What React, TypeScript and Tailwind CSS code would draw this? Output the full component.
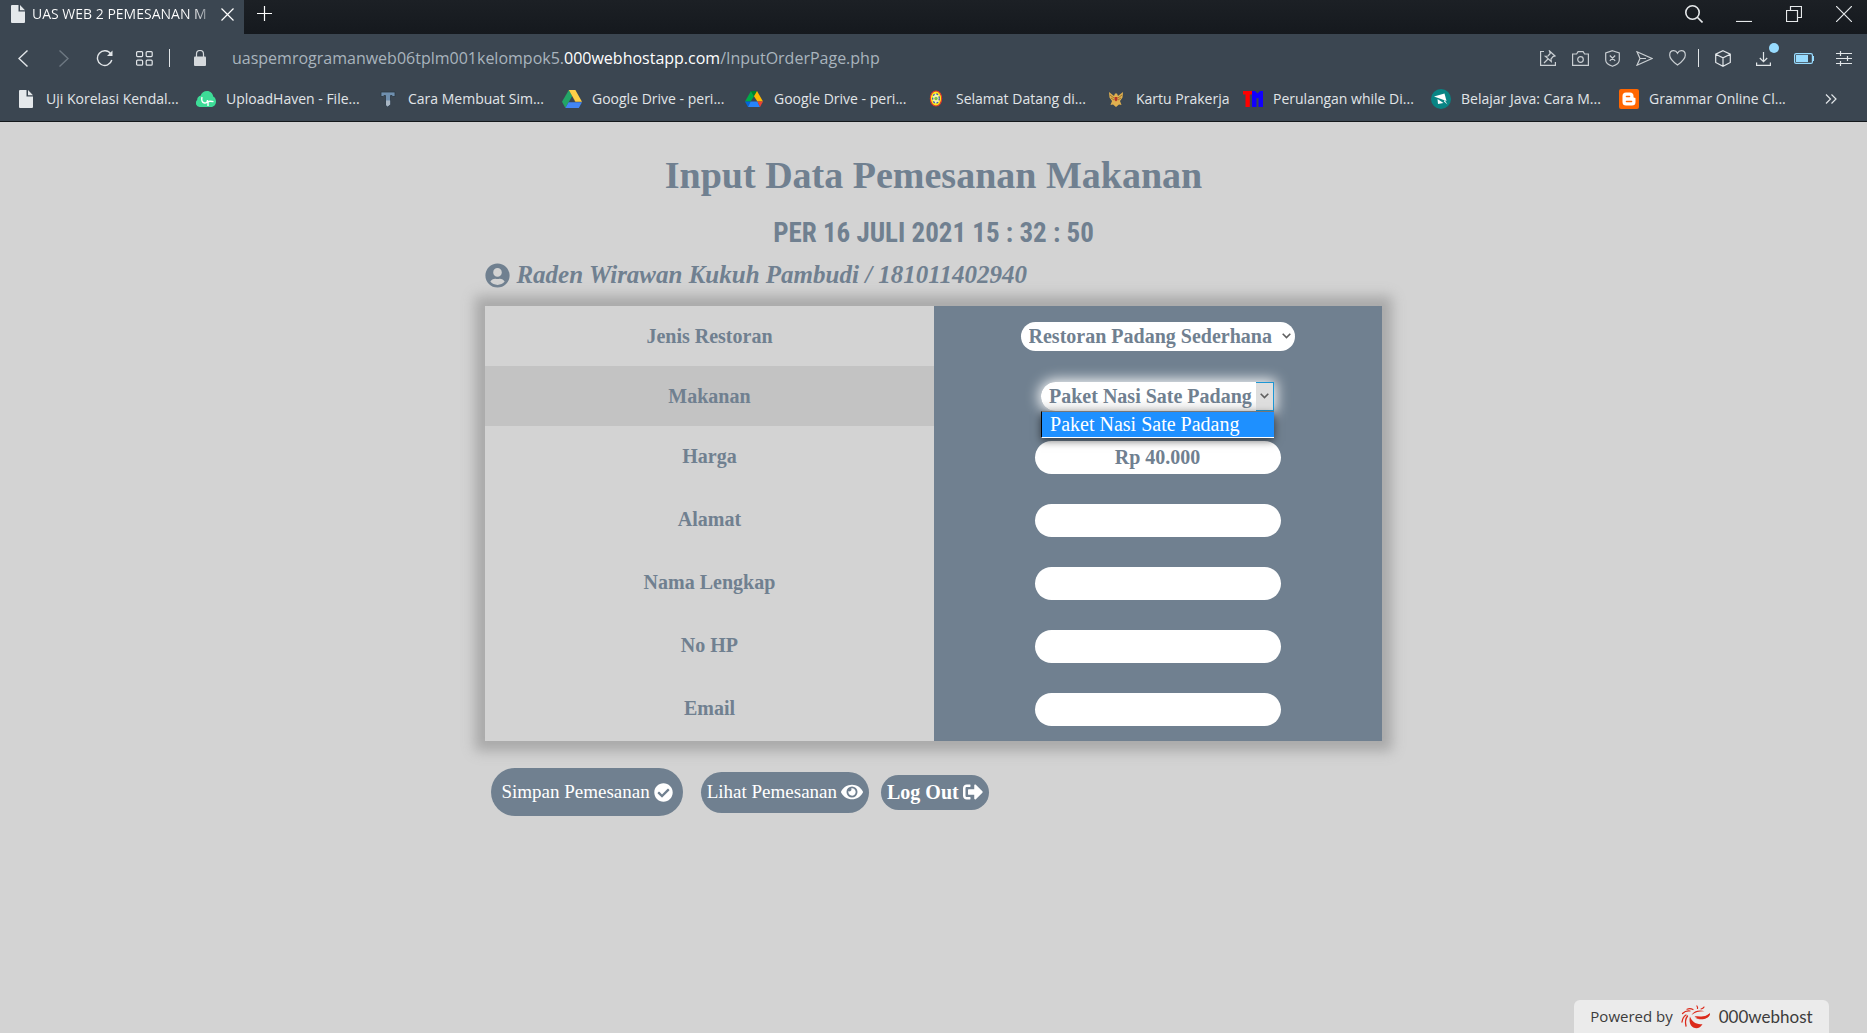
import { useState, type ReactNode } from "react";
import { FaCheckCircle, FaEye, FaSignOutAlt, FaUserCircle } from "react-icons/fa";

function PageIcon() {
  return (
    <svg viewBox="0 0 14 18" className="h-[18px] w-[14px]" fill="#e4e8eb">
      <path d="M0 1a1 1 0 0 1 1-1h6.500v6.500H14V17a1 1 0 0 1-1 1H1a1 1 0 0 1-1-1z" />
      <path d="M9 0l5 5.200H9z" />
    </svg>
  );
}

function DriveOldIcon() {
  return (
    <svg viewBox="0 0 20 18" className="h-[18px] w-5">
      <path d="M6.800 0L0 11.800 3.400 18 10.200 6z" fill="#23a566" />
      <path d="M6.800 0h6.600L20 11.800h-6.600z" fill="#ffcf48" />
      <path d="M6.600 12.200H20L16.800 18H3.400z" fill="#4285f4" />
      <path d="M13.400 11.800L10.200 6l3 6z" fill="#c79a2d" />
    </svg>
  );
}

function DriveIcon() {
  return (
    <svg viewBox="0 0 18 16" className="h-4 w-[18px]">
      <path d="M6 0L0 10.500h5.600L9 5.200z" fill="#00ac47" />
      <path d="M6 0h6L9 5.200z" fill="#00832d" />
      <path d="M12 0l6 10.500h-5.600L9 5.200z" fill="#ffba00" />
      <path d="M0 10.500h5.600L3 16z" fill="#0066da" />
      <path d="M5.600 10.500h6.800L15 16H3z" fill="#2684fc" />
      <path d="M12.400 10.500H18L15 16z" fill="#ea4335" />
    </svg>
  );
}

function CloudIcon() {
  return (
    <svg viewBox="0 0 20 16" className="h-4 w-5">
      <path d="M4 16a4 4 0 0 1-2.800-7C1 6.500 3 5 4.500 4.800 5.500 1.500 8 0 11 0c3.500 0 6 2.500 6.200 5.600C19 6.500 20 8.500 20 10.500c0 3-2 5.500-5 5.500z" fill="#3ddc97" />
      <path d="M6 6c-.8 3 0 5.500 2.500 6 2 .3 3.200-1.200 3-3M12 15v-3.500c0-1.500 3-1.500 5.500-.8" fill="none" stroke="#fff" strokeWidth="1.400" />
    </svg>
  );
}

function HammerIcon() {
  return (
    <svg viewBox="0 0 16 16" className="size-4">
      <path d="M1 1h14v4.500h-2.500l-.5-1h-1.500v9l-3 2.500-2-2V4.500H4L3 5.500H1z" fill="#6f8fae" stroke="#2c3743" strokeWidth=".8" />
      <path d="M6 9.500h4.200v4L7.500 15.500 6 14z" fill="#a9b6c3" />
    </svg>
  );
}

function SealIcon() {
  return (
    <svg viewBox="0 0 14 18" className="h-[17px] w-[14px]">
      <ellipse cx="7" cy="9" rx="6" ry="8" fill="#ffe81a" stroke="#e0392b" strokeWidth="1.200" />
      <ellipse cx="7" cy="9" rx="3.500" ry="5" fill="#f4f0b0" stroke="#3558b8" strokeWidth="1.400" strokeDasharray="2 2" />
      <circle cx="7" cy="9" r="1.800" fill="#7ac043" />
    </svg>
  );
}

function GarudaIcon() {
  return (
    <svg viewBox="0 0 16 16" className="size-4">
      <path d="M1 1l5 4 1-2.500h2L10 5l5-4-.5 5.500L12 10l1.500 4-2.500-.5L8 16l-3-2.500-2.500.5L4 10 1.500 6.500z" fill="#e0b04f" />
      <path d="M6.500 6h3v3L8 10.500 6.500 9z" fill="#b3362a" />
      <path d="M2 4l4 3M14 4l-4 3M3 7l3 2M13 7l-3 2" stroke="#8f6a24" strokeWidth=".8" />
    </svg>
  );
}

function TmIcon() {
  return (
    <svg viewBox="0 0 20 16" className="h-4 w-5">
      <path d="M0 0h9v3.500H6.800V16H2.500V3.500H0z" fill="#f00" />
      <path d="M9 0h3l2.500 2.500L17 0h3v16h-4.500V6.500l-1 1-1-1V16H9z" fill="#10f" />
    </svg>
  );
}

function TutorialIcon() {
  return (
    <svg viewBox="0 0 20 20" className="size-5">
      <circle cx="10" cy="10" r="10" fill="#098484" />
      <path d="M3 7.500l10.500-3L15.500 12z" fill="#fff" />
      <path d="M6.500 10l6 4-5.500 1z" fill="#fff" />
      <path d="M13.500 11l3 4.500-3.500-3z" fill="#fff" />
    </svg>
  );
}

function BloggerIcon() {
  return (
    <svg viewBox="0 0 20 20" className="size-5">
      <rect width="20" height="20" rx="2" fill="#ff6600" />
      <path d="M7 3.500h4a3.500 3.500 0 0 1 3.500 3.500v.8c0 .7.400 1 1 1 .8 0 1 .3 1 1V13a3.500 3.500 0 0 1-3.500 3.500H7A3.500 3.500 0 0 1 3.500 13V7A3.500 3.500 0 0 1 7 3.500z" fill="#fff" />
      <path d="M7.500 7.500h3M7.500 12.500h5" stroke="#ff6600" strokeWidth="1.600" strokeLinecap="round" />
    </svg>
  );
}

type LineProps = { box: string; className: string; children: ReactNode };

function Line({ box, className, children }: LineProps) {
  return (
    <svg viewBox={box} className={className} fill="none" stroke="currentColor" strokeWidth="1.200">
      {children}
    </svg>
  );
}

const bookmarks = [
  { label: "Uji Korelasi Kendal...", icon: <PageIcon />, width: "w-[180px]" },
  { label: "UploadHaven - File...", icon: <CloudIcon />, width: "w-[182px]" },
  { label: "Cara Membuat Sim...", icon: <HammerIcon />, width: "w-[184px]" },
  { label: "Google Drive - peri...", icon: <DriveOldIcon />, width: "w-[182px]" },
  { label: "Google Drive - peri...", icon: <DriveIcon />, width: "w-[182px]" },
  { label: "Selamat Datang di...", icon: <SealIcon />, width: "w-[180px]" },
  { label: "Kartu Prakerja", icon: <GarudaIcon />, width: "w-[137px]" },
  { label: "Perulangan while Di...", icon: <TmIcon />, width: "w-[188px]" },
  { label: "Belajar Java: Cara M...", icon: <TutorialIcon />, width: "w-[188px]" },
  { label: "Grammar Online Cl...", icon: <BloggerIcon />, width: "w-[188px]" },
];

function TabBar() {
  return (
    <div className="flex h-[34px] justify-between bg-linear-to-b from-[#1c2025] to-[#15191e]">
      <div className="flex">
        <div className="flex w-[244px] items-center bg-[#3b4651] pb-[6px] pl-[11px] text-white">
          <PageIcon />
          <span className="ml-[7px] w-[184px] bg-linear-to-r from-white from-88% to-[#3b4651] bg-clip-text text-[14px] leading-5 whitespace-nowrap text-transparent">
            UAS WEB 2 PEMESANAN M
          </span>
          <button aria-label="Close tab" className="ml-[5px]">
            <Line box="0 0 13 13" className="size-[13px]"><path d="M.5.5l12 12M12.500.5l-12 12" /></Line>
          </button>
        </div>
        <button aria-label="New tab" className="ml-[13px] pb-[7px] text-white">
          <Line box="0 0 15 15" className="size-[15px]"><path d="M7.500 0v15M0 7.500h15" /></Line>
        </button>
      </div>
      <div className="flex items-center pr-[15px] pb-[7px] text-[#e6e9eb]">
        <button aria-label="Search tabs">
          <Line box="0 0 18 18" className="size-[18px]"><circle cx="7.500" cy="7.500" r="6.700" strokeWidth="1.600" /><path d="M12.300 12.300l5.200 5.200" strokeWidth="1.600" /></Line>
        </button>
        <button aria-label="Minimize" className="ml-[33px]">
          <Line box="0 0 16 16" className="size-4"><path d="M0 15.500h16" /></Line>
        </button>
        <button aria-label="Restore" className="ml-[34px]">
          <Line box="0 0 16 16" className="size-4"><path d="M.5 4.500h11v11H.5zM4.500 4.500v-4h11v11h-4" /></Line>
        </button>
        <button aria-label="Close window" className="ml-[34px]">
          <Line box="0 0 16 16" className="size-4"><path d="M0 0l16 16M16 0L0 16" /></Line>
        </button>
      </div>
    </div>
  );
}

function AddressBar() {
  return (
    <div className="flex h-[48px] items-center pr-[15px] pl-[18px] text-[#e1e5e8]">
      <button aria-label="Back"><Line box="0 0 10 17" className="h-[17px] w-[10px]"><path d="M9.500.5l-8.500 8 8.500 8" strokeWidth="1.400" /></Line></button>
      <button aria-label="Forward" className="ml-[31px] text-[#6d7882]"><Line box="0 0 10 17" className="h-[17px] w-[10px]"><path d="M.5.5l8.500 8-8.500 8" strokeWidth="1.400" /></Line></button>
      <button aria-label="Reload" className="ml-[27px]">
        <Line box="0 0 17 17" className="size-[17px]"><path d="M14.800 4A7.300 7.300 0 1 0 15.800 10" strokeWidth="1.400" /><path d="M16.500.5v5.500H11z" fill="currentColor" stroke="none" /></Line>
      </button>
      <button aria-label="Speed dial" className="ml-[23px]">
        <Line box="0 0 17 15" className="h-[15px] w-[17px]">
          <rect x=".6" y=".6" width="6" height="5" rx="1" /><rect x="10.200" y=".6" width="6" height="5" rx="1" />
          <rect x=".6" y="9.200" width="6" height="5" rx="1" /><rect x="10.200" y="9.200" width="6" height="5" rx="1" />
        </Line>
      </button>
      <span className="ml-4 h-[18px] w-px bg-[#e1e5e8]" />
      <svg viewBox="0 0 12 16" className="ml-6 h-4 w-3"><path d="M2.500 7V4a3.500 3.500 0 0 1 7 0v3" fill="none" stroke="#d5d9dc" strokeWidth="1.200" /><rect y="6.500" width="12" height="9.500" rx="1" fill="#d5d9dc" /></svg>
      <span className="ml-[26px] flex-1 text-[16px] leading-6 whitespace-nowrap text-[#a9b4bd]">
        uaspemrogramanweb06tplm001kelompok5.<span className="text-white">000webhostapp.com</span>/InputOrderPage.php
      </span>
      <div className="flex items-center gap-4 text-[#c9ced2]">
        <button aria-label="Share snapshot"><Line box="0 0 16 16" className="size-4"><path d="M4 1.500H.6v13.900h14.800V12" /><path d="M9.500 1l5.500 5-2 .6-2 2.400.3 2.500-6-5.300 2.700-.2 2.200-2.500zM8 9l-4 4" /></Line></button>
        <button aria-label="Camera"><Line box="0 0 17 15" className="h-[15px] w-[17px]"><path d="M.6 3h4l1.500-2.400h5L12.600 3h3.800v11.400H.6z" /><circle cx="8.500" cy="8.500" r="2.800" /></Line></button>
        <button aria-label="Ad blocker"><Line box="0 0 15 17" className="h-[17px] w-[15px]"><path d="M7.500.7l6.800 2.200v7c0 3-3 5-6.800 6.400C3.700 14.900.7 12.900.7 9.900v-7zM4.800 5.500l5.400 5.400M10.200 5.500l-5.400 5.400" /></Line></button>
        <button aria-label="Send"><Line box="0 0 17 15" className="h-[15px] w-[17px]"><path d="M1 .8l15 6.700-15 6.700 3-6.700zM4 7.500h6" /></Line></button>
        <button aria-label="Favorite"><Line box="0 0 17 16" className="h-4 w-[17px]"><path d="M8.500 15C3 11 .7 8.500.7 5.200.7 2.500 2.500.7 4.700.7c1.600 0 3 .9 3.800 2.500C9.300 1.600 10.700.7 12.300.7c2.200 0 4 1.800 4 4.500 0 3.300-2.300 5.800-7.800 9.800z" /></Line></button>
      </div>
      <span className="ml-3 h-[18px] w-px bg-[#e1e5e8]" />
      <div className="flex items-center">
        <button aria-label="Extensions" className="ml-4"><Line box="0 0 16 17" className="h-[17px] w-4"><path d="M8 .7l7.300 3.500v8.300L8 16.300.7 12.500V4.200zM.7 4.200L8 7.800l7.300-3.600M8 7.800v8.500" /></Line></button>
        <button aria-label="Downloads" className="relative ml-[25px]">
          <Line box="0 0 15 15" className="size-[15px]"><path d="M7.500 1v9.500M3.800 7l3.700 3.700L11.200 7M.6 11.500v2.900h13.800v-2.900" /></Line>
          <span className="absolute -top-2 -right-2 size-[10px] rounded-full bg-[#98dcff]" />
        </button>
        <button aria-label="Battery saver" className="ml-[23px]">
          <svg viewBox="0 0 20 11" className="h-[11px] w-5"><rect x=".6" y=".6" width="17.800" height="9.800" rx="1.500" fill="none" stroke="#98dcff" strokeWidth="1.200" /><path d="M2 2h12v7H2zM18.500 3H20v5h-1.500z" fill="#98dcff" /></svg>
        </button>
        <button aria-label="Easy setup" className="ml-[22px]"><Line box="0 0 16 15" className="h-[15px] w-4"><path d="M0 2.500h16M0 7.500h16M0 12.500h16M4.500 0v5M11.500 5v5M4.500 10v5" /></Line></button>
      </div>
    </div>
  );
}

function Bookmarks() {
  return (
    <nav className="flex h-[39px] items-center justify-between pr-[30px] pb-[6px] pl-[15px] text-[#e1e5e8]">
      <div className="flex">
        {bookmarks.map((b, i) => (
          <a key={i} href="#" className={`flex shrink-0 items-center gap-[9px] text-[14px] leading-5 whitespace-nowrap ${b.width}`}>
            <span className="flex w-[22px] justify-center">{b.icon}</span>
            {b.label}
          </a>
        ))}
      </div>
      <button aria-label="More bookmarks"><Line box="0 0 12 10" className="h-[10px] w-3"><path d="M1 .5L5.500 5 1 9.500M6.500.5L11 5l-4.500 4.500" /></Line></button>
    </nav>
  );
}

function Chevron() {
  return (
    <svg viewBox="0 0 9 6" className="h-[6px] w-[9px]" fill="none" stroke="#606060" strokeWidth="1.600"><path d="M.7.7l3.800 3.800L8.300.7" /></svg>
  );
}

type RowProps = { id: string; label: string; tall?: boolean; active?: boolean; children: ReactNode };

function Row({ id, label, tall, active, children }: RowProps) {
  return (
    <tr className={tall ? "h-[63px]" : "h-[60px]"}>
      <th scope="row" className={`w-1/2 text-center font-bold ${tall ? "p-0 pb-1" : "p-0"} ${active ? "bg-[#c3c3c3]" : "bg-[#d3d3d3]"}`}>
        <label htmlFor={id}>{label}</label>
      </th>
      <td className="w-1/2 bg-[#708090] p-0">
        <div className="flex justify-center">{children}</div>
      </td>
    </tr>
  );
}

const textFields = [
  { id: "alamat", label: "Alamat", type: "text" },
  { id: "nama", label: "Nama Lengkap", type: "text" },
  { id: "hp", label: "No HP", type: "tel" },
  { id: "email", label: "Email", type: "email" },
];

const inputClass = "h-[33px] w-[246px] rounded-full bg-white px-3 text-center font-bold outline-none";

function OrderForm() {
  const [price, setPrice] = useState("Rp 40.000");
  return (
    <table className="w-full table-fixed border-collapse text-[20px] leading-6 text-[#708090] shadow-[0_0_12px_10px_#a9a9a9]">
      <tbody>
        <Row id="restoran" label="Jenis Restoran">
          <div className="relative">
            <select id="restoran" className="h-[29px] w-[274px] appearance-none rounded-full bg-white pl-2 font-bold outline-none">
              <option>Restoran Padang Sederhana</option>
            </select>
            <span className="pointer-events-none absolute inset-y-0 right-1 flex items-center"><Chevron /></span>
          </div>
        </Row>
        <Row id="makanan" label="Makanan" active>
          <div className="relative">
            <select id="makanan" className="h-[29px] w-[233px] appearance-none rounded-l-full bg-linear-to-b from-white from-60% to-[#e6e6e6] pl-2 font-bold shadow-[0_0_14px_2px_#ffffff] outline-none">
              <option>Paket Nasi Sate Padang</option>
            </select>
            <span className="pointer-events-none absolute inset-y-0 right-0 flex w-[18px] items-center justify-center border-y border-r border-[#1c97d5] bg-[#dedede]"><Chevron /></span>
            <ul className="absolute top-full left-0 z-10 w-full border-t border-b border-l border-t-[#777] border-b-white border-l-black bg-[#1e90ff] text-white shadow-[0_3px_8px_rgba(0,0,0,0.55)]">
              <li className="pl-2 leading-[25px]">Paket Nasi Sate Padang</li>
            </ul>
          </div>
        </Row>
        <Row id="harga" label="Harga" tall>
          <input id="harga" value={price} onChange={(e) => setPrice(e.target.value)} className={inputClass} />
        </Row>
        {textFields.map((f) => (
          <Row key={f.id} id={f.id} label={f.label} tall>
            <input id={f.id} type={f.type} className={inputClass} />
          </Row>
        ))}
      </tbody>
    </table>
  );
}

function HostBadge() {
  return (
    <a href="#" className="fixed right-[38px] bottom-0 flex h-[33px] w-[255px] items-center justify-center gap-2 rounded-t-md bg-[#ebebeb] text-[15px] text-[#3c3c3c]">
      <span className="font-['Open_Sans',sans-serif]">Powered by</span>
      <svg viewBox="0 0 30 24" className="h-6 w-[30px]" fill="#dc2a1b">
        <path d="M29 8c-.5 5.500-8 8.500-15.500 4.500 5.500 1.500 10.500.5 15.500-4.500z" />
        <path d="M29 8.500c-2 1-4 2.500-7 2.800-3 .4-6 0-8.500 0 3 2.700 7 3.400 10.500 2.200 3-1 5-2.500 5-5z" />
        <path d="M9 11.500c1.500 5 6.500 8.500 12.500 7.500-2 4.500-7.500 5.500-10.500 2.500-2.500-2.500-3-6.500-2-10z" />
        <path d="M10.500 10c2.500-4.500 8-5.500 13-3.800-4.500-.2-9 .5-13 3.800z" />
        <g fill="none" stroke="#dc2a1b" strokeLinecap="round">
          <path d="M6.500 11c-2.300 3-2.500 6-1.500 10M5 10c-2.500 1.500-3.500 3.500-4 7" strokeWidth="1.300" />
          <path d="M9 6C6 5.500 3.500 6.500 1.500 8.500M12 4.500c-2-1-4-1-6-.3M16.500 3.500c.3-1 0-1.700-.6-2.500M20 4c1.500-.3 2.500-.9 3-2" strokeWidth="1.200" />
        </g>
      </svg>
      <span className="text-[17px] font-['Lato','Inter',sans-serif]">000webhost</span>
    </a>
  );
}

export default function App() {
  return (
    <div className="flex min-h-screen flex-col bg-[#d3d3d3]">
      <header className="overflow-hidden border-b border-[#14181c] bg-[#3b4651] font-['Open_Sans','Noto_Sans',sans-serif]">
        <TabBar />
        <AddressBar />
        <Bookmarks />
      </header>
      <main className="mx-auto flex w-[48%] flex-col pt-[31px] font-['Liberation_Serif',serif] text-[#708090]">
        <h1 className="text-center text-[38px] leading-[44px] font-bold">Input Data Pemesanan Makanan</h1>
        <p className="mt-[18px] text-center text-[27px] leading-9 font-bold whitespace-nowrap font-['Roboto_Condensed',Roboto,sans-serif]">
          PER 16 JULI 2021 15 : 32 : 50
        </p>
        <h2 className="mt-2 flex h-8 items-center gap-[6px] text-[25px] leading-8 font-bold whitespace-nowrap italic">
          <FaUserCircle className="size-[25px]" />
          Raden Wirawan Kukuh Pambudi / 181011402940
        </h2>
        <form className="mt-[15px]">
          <OrderForm />
          <div className="mt-[27px] flex items-center pl-[6px] whitespace-nowrap text-white">
            <button type="button" className="flex h-12 items-center gap-1 rounded-full bg-[#708090] px-[10px] text-[19px]">
              Simpan Pemesanan <FaCheckCircle className="size-[19px]" />
            </button>
            <button type="button" className="ml-[18px] flex h-[41px] items-center gap-1 rounded-full bg-[#708090] px-[6px] text-[19px]">
              Lihat Pemesanan <FaEye className="size-[22px]" />
            </button>
            <button type="button" className="ml-3 flex h-[35px] items-center gap-1 rounded-full bg-[#708090] px-[6px] text-[20px] font-bold">
              Log Out <FaSignOutAlt className="size-5" />
            </button>
          </div>
        </form>
      </main>
      <HostBadge />
    </div>
  );
}
